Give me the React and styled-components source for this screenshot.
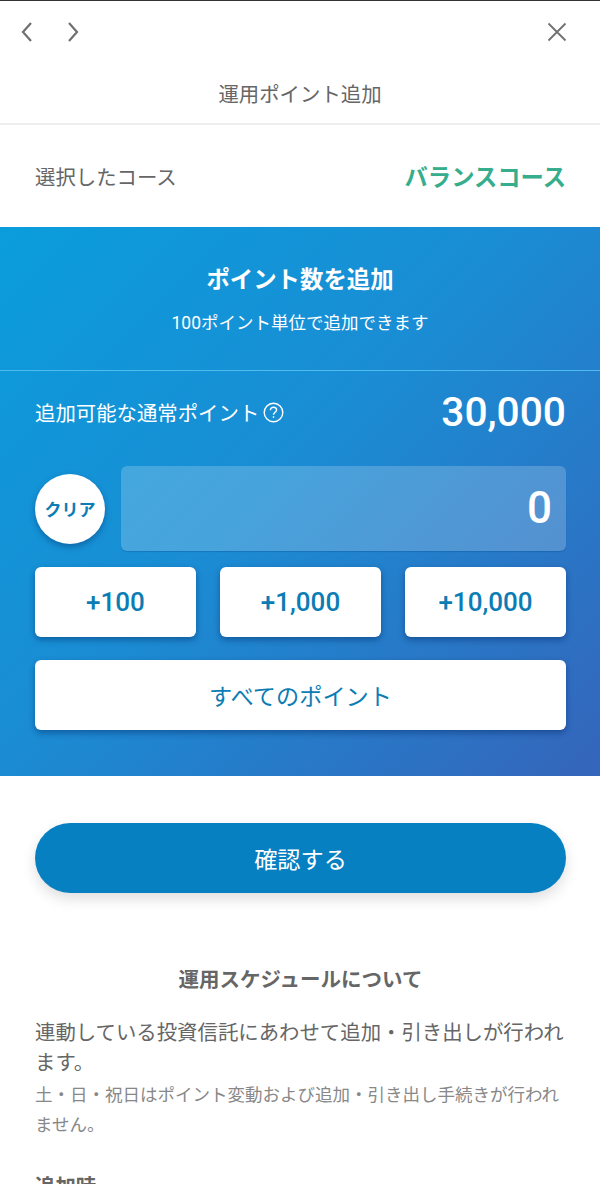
import React from 'react';
import styled, { createGlobalStyle } from 'styled-components';

const GlobalStyle = createGlobalStyle`
  html, body {
    margin: 0;
    padding: 0;
    background: #fff;
    font-family: Roboto, "Noto Sans CJK JP", sans-serif;
    overflow: hidden;
  }
  * { box-sizing: border-box; }
`;

const Page = styled.div`
  width: 600px;
  height: 1184px;
  overflow: hidden;
  border-top: 1px solid #333;
  color: #666;
`;

const NavBar = styled.nav`
  display: flex;
  align-items: center;
  justify-content: space-between;
  height: 62px;
  padding: 0 33px 0 19px;
`;

const NavArrows = styled.div`
  display: flex;
  gap: 30px;
`;

const IconButton = styled.button`
  display: flex;
  width: ${(props) => (props.$close ? '20px' : '16px')};
  height: 24px;
  align-items: center;
  justify-content: center;
  border: 0;
  padding: 0;
  background: none;
  color: #707070;
`;

const Header = styled.h1`
  margin: 0;
  height: 62px;
  padding-top: 16px;
  border-bottom: 2px solid #eee;
  font-size: 20.4px;
  line-height: 32px;
  font-weight: 400;
  text-align: center;
`;

const CourseRow = styled.div`
  display: flex;
  align-items: center;
  justify-content: space-between;
  height: 102px;
  padding: 0 34px 0 35px;
`;

const CourseLabel = styled.span`
  font-size: 20.4px;
`;

const CourseName = styled.strong`
  font-size: 23.3px;
  font-weight: 700;
  color: #36ad8c;
`;

const PointsPanel = styled.section`
  height: 549px;
  background: linear-gradient(135deg, #0a9ddc 0%, #1a8dd4 45%, #3565bb 100%);
  color: #fff;
`;

const PanelHead = styled.div`
  height: 144px;
  padding-top: 36px;
  border-bottom: 1px solid #4fbcee;
  text-align: center;
`;

const PanelTitle = styled.h2`
  margin: 0;
  font-size: 23.4px;
  line-height: 34px;
  font-weight: 700;
`;

const PanelNote = styled.p`
  margin: 13px 0 0;
  font-size: 17.5px;
  line-height: 26px;
`;

const PanelBody = styled.div`
  padding: 0 34px 0 35px;
`;

const AvailableRow = styled.div`
  display: flex;
  align-items: center;
  justify-content: space-between;
  height: 82px;
`;

const AvailableLabel = styled.span`
  display: flex;
  align-items: center;
  gap: 4px;
  font-size: 20.4px;
`;

const AvailableValue = styled.span`
  font-size: 40.7px;
  font-weight: 500;
`;

const InputRow = styled.div`
  display: flex;
  align-items: center;
  gap: 16px;
  height: 85px;
  margin-top: 13px;
`;

const ClearButton = styled.button`
  flex: none;
  width: 70px;
  height: 70px;
  border: 0;
  border-radius: 50%;
  padding: 0;
  background: #fff;
  color: #0b7cb4;
  font-family: inherit;
  font-size: 17px;
  font-weight: 700;
  box-shadow: 0 3px 6px rgba(0, 40, 100, 0.4);
`;

const AmountField = styled.div`
  flex: 1;
  height: 85px;
  padding-right: 14px;
  border-radius: 6px;
  background: rgba(255, 255, 255, 0.2);
  box-shadow: 0 1px 1px rgba(0, 70, 140, 0.3);
  font-size: 44px;
  line-height: 85px;
  font-weight: 500;
  text-align: right;
`;

const AddGrid = styled.div`
  display: grid;
  grid-template-columns: repeat(3, 1fr);
  gap: 24px;
  margin-top: 16px;
`;

const AddButton = styled.button`
  height: 70px;
  border: 0;
  border-radius: 6px;
  padding: 0;
  background: #fff;
  color: #0b7cb4;
  font-family: inherit;
  font-size: ${(props) => (props.$wide ? '23.2px' : '26px')};
  font-weight: ${(props) => (props.$wide ? 400 : 500)};
  box-shadow: 0 3px 6px rgba(0, 40, 100, 0.45);
  ${(props) => props.$wide && 'width: 100%; margin-top: 23px; display: block;'}
`;

const ConfirmWrap = styled.div`
  padding: 47px 34px 0 35px;
`;

const ConfirmButton = styled.button`
  display: block;
  width: 100%;
  height: 70px;
  border: 0;
  border-radius: 35px;
  background: #0780c2;
  color: #fff;
  font-family: inherit;
  font-size: 23.2px;
  box-shadow: 0 6px 14px rgba(0, 0, 0, 0.13);
`;

const Schedule = styled.section`
  padding: 71px 34px 0 35px;
`;

const ScheduleTitle = styled.h3`
  margin: 0;
  font-size: 20.5px;
  line-height: 32px;
  font-weight: 700;
  text-align: center;
`;

const ScheduleText = styled.p`
  margin: 22px 0 0;
  font-size: 20.4px;
  line-height: 30px;
`;

const ScheduleNote = styled.p`
  margin: 2px 0 0;
  font-size: 17.5px;
  line-height: 30px;
  color: #888;
`;

const SubHeading = styled.h4`
  margin: 31px 0 0;
  font-size: 20.4px;
  line-height: 32px;
  font-weight: 700;
`;

function Chevron({ left }) {
  return (
    <svg width="14" height="22" viewBox="0 0 14 22" fill="none" stroke="currentColor" strokeWidth="2.2">
      <path d={left ? 'M11 2 3 11l8 9' : 'M3 2l8 9-8 9'} />
    </svg>
  );
}

function CloseIcon() {
  return (
    <svg width="20" height="20" viewBox="0 0 20 20" fill="none" stroke="currentColor" strokeWidth="1.8">
      <path d="M1.5 1.5l17 17M18.5 1.5l-17 17" />
    </svg>
  );
}

function HelpIcon() {
  return (
    <svg width="21" height="21" viewBox="0 0 21 21" fill="none" stroke="currentColor" strokeWidth="1.4">
      <circle cx="10.5" cy="10.5" r="9.3" />
      <path d="M7.4 8.2c0-1.9 1.4-3 3.1-3s3.1 1.1 3.1 2.8c0 2.2-3.1 2.4-3.1 4.8" />
      <path d="M10.5 14.2v1.6" />
    </svg>
  );
}

export default function App() {
  return (
    <Page>
      <GlobalStyle />
      <NavBar>
        <NavArrows>
          <IconButton><Chevron left /></IconButton>
          <IconButton><Chevron /></IconButton>
        </NavArrows>
        <IconButton $close><CloseIcon /></IconButton>
      </NavBar>
      <Header>運用ポイント追加</Header>
      <CourseRow>
        <CourseLabel>選択したコース</CourseLabel>
        <CourseName>バランスコース</CourseName>
      </CourseRow>
      <PointsPanel>
        <PanelHead>
          <PanelTitle>ポイント数を追加</PanelTitle>
          <PanelNote>100ポイント単位で追加できます</PanelNote>
        </PanelHead>
        <PanelBody>
          <AvailableRow>
            <AvailableLabel>追加可能な通常ポイント<HelpIcon /></AvailableLabel>
            <AvailableValue>30,000</AvailableValue>
          </AvailableRow>
          <InputRow>
            <ClearButton>クリア</ClearButton>
            <AmountField>0</AmountField>
          </InputRow>
          <AddGrid>
            <AddButton>+100</AddButton>
            <AddButton>+1,000</AddButton>
            <AddButton>+10,000</AddButton>
          </AddGrid>
          <AddButton $wide>すべてのポイント</AddButton>
        </PanelBody>
      </PointsPanel>
      <ConfirmWrap>
        <ConfirmButton>確認する</ConfirmButton>
      </ConfirmWrap>
      <Schedule>
        <ScheduleTitle>運用スケジュールについて</ScheduleTitle>
        <ScheduleText>連動している投資信託にあわせて追加・引き出しが行われます。</ScheduleText>
        <ScheduleNote>土・日・祝日はポイント変動および追加・引き出し手続きが行われません。</ScheduleNote>
        <SubHeading>追加時</SubHeading>
      </Schedule>
    </Page>
  );
}
